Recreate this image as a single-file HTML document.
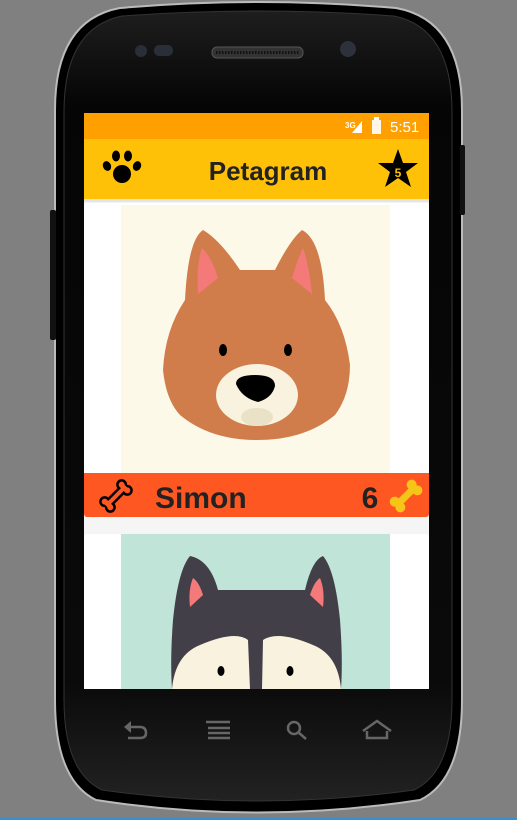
<!DOCTYPE html>
<html><head><meta charset="utf-8"><style>
html,body{margin:0;padding:0;width:517px;height:820px;overflow:hidden;background:#808080;font-family:"Liberation Sans",sans-serif}
</style></head><body>
<svg width="517" height="820" viewBox="0 0 517 820" style="position:absolute;left:0;top:0">
<defs>
<linearGradient id="bz" x1="0" y1="0" x2="0" y2="1"><stop offset="0" stop-color="#1e1e1e"/><stop offset="0.12" stop-color="#050505"/><stop offset="0.85" stop-color="#0a0a0a"/><stop offset="1" stop-color="#222"/></linearGradient>
</defs>
<path d="M120,8 Q258,-4 396,8 Q462,20 462,110 L462,700 Q462,780 420,800 Q258,825 96,800 Q55,780 55,700 L55,110 Q55,20 120,8Z" fill="#000" stroke="#bbb" stroke-width="2"/>
<path d="M122,16 Q258,6 394,16 Q452,28 452,112 L452,700 Q452,772 414,790 Q258,812 102,790 Q64,772 64,700 L64,112 Q64,28 122,16Z" fill="url(#bz)" stroke="#333" stroke-width="1"/>
<rect x="50" y="210" width="6" height="130" rx="2" fill="#111"/>
<rect x="460" y="145" width="5" height="70" rx="2" fill="#111"/>
<circle cx="141" cy="51" r="6" fill="#2a2e38"/>
<rect x="154" y="45" width="19" height="11" rx="5" fill="#2a2e38"/>
<circle cx="348" cy="49" r="8" fill="#2c313b"/>
<rect x="212" y="47" width="91" height="11" rx="5" fill="#333" stroke="#555"/>
<line x1="216" y1="52.5" x2="299" y2="52.5" stroke="#111" stroke-width="3" stroke-dasharray="1.5 1.5"/>
<g fill="none" stroke="#666" stroke-width="2.5">
<path d="M126,727 L140,727 Q146,727 146,733 Q146,738 140,738 L128,738"/>
<path d="M206,722 L230,722 M208,728 L230,728 M208,733 L230,733 M208,738 L230,738"/>
<circle cx="294" cy="728" r="6"/><path d="M298,732 L306,739"/>
<path d="M363,731 L377,721 L391,731 M367,731 L367,738 L387,738 L387,731"/>
</g>
<path d="M124,727 L131,721 L131,733Z" fill="#666"/>
<rect x="84" y="113" width="345" height="576" fill="#F5F5F5"/>
<rect x="84" y="113" width="345" height="26" fill="#FFA000"/>
<rect x="84" y="139" width="345" height="60" fill="#FFC107"/>
<rect x="84" y="199" width="345" height="3" fill="#e4e4e4"/>
<text x="345" y="128" font-size="8" font-weight="bold" fill="#fff">3G</text>
<path d="M352,133 L362,121 L362,133Z" fill="#fff"/>
<rect x="372" y="120" width="9" height="14" fill="#fff" opacity="0.9"/>
<rect x="374" y="117" width="5" height="3" fill="#fff"/>
<text x="390" y="132" font-size="15" fill="#fff">5:51</text>
<g fill="#000">
<ellipse cx="122" cy="174" rx="9" ry="9"/>
<ellipse cx="107" cy="166" rx="4" ry="5" transform="rotate(-25 107 166)"/>
<ellipse cx="116" cy="156" rx="4" ry="5.5"/>
<ellipse cx="128" cy="156" rx="4" ry="5.5"/>
<ellipse cx="137" cy="166" rx="4" ry="5" transform="rotate(25 137 166)"/>
</g>
<text x="268" y="180" font-size="26" font-weight="bold" fill="#222" text-anchor="middle">Petagram</text>
<path d="M398,149 L403,163 L418,163 L406,172 L411,187 L398,178 L385,187 L390,172 L378,163 L393,163Z" fill="#000"/>
<text x="398" y="177" font-size="12" font-weight="bold" fill="#FFC107" text-anchor="middle">5</text>
<rect x="84" y="203" width="345" height="314" rx="3" fill="#fff"/>
<rect x="121" y="205" width="269" height="268" fill="#FDF9E9"/>
<path d="M203,230 Q188,240 185,300 Q165,330 163,370 Q166,400 180,415 Q210,440 257,440 Q305,440 335,415 Q350,395 350,365 Q345,325 325,300 Q322,240 302,230 Q290,240 275,270 L240,270 Q220,240 203,230Z" fill="#D17C4B"/>
<path d="M202,248 Q196,265 198,294 L218,278 Q212,258 202,248Z" fill="#F47A7A"/>
<path d="M303,248 Q309,265 312,294 L292,278 Q298,258 303,248Z" fill="#F47A7A"/>
<ellipse cx="223" cy="350" rx="4" ry="6" fill="#000"/>
<ellipse cx="288" cy="350" rx="4" ry="6" fill="#000"/>
<ellipse cx="257" cy="395" rx="41" ry="31" fill="#F8F2DE"/>
<ellipse cx="257" cy="417" rx="16" ry="9" fill="#E9E2C6"/>
<path d="M236,384 Q236,375 255,375 Q275,375 275,386 Q272,398 258,402 Q242,398 236,384Z" fill="#000"/>
<rect x="84" y="473" width="345" height="44" rx="3" fill="#FF5722"/>
<rect x="84" y="473" width="345" height="6" fill="#FF5722"/>
<g transform="translate(116,496) rotate(-45)">
<g fill="#000">
<rect x="-11" y="-4.5" width="22" height="9"/>
<circle cx="-12" cy="-4" r="5.5"/><circle cx="-12" cy="4" r="5.5"/>
<circle cx="12" cy="-4" r="5.5"/><circle cx="12" cy="4" r="5.5"/>
</g>
<g fill="#FF5722">
<rect x="-11" y="-2" width="22" height="4"/>
<circle cx="-12" cy="-4" r="3"/><circle cx="-12" cy="4" r="3"/>
<circle cx="12" cy="-4" r="3"/><circle cx="12" cy="4" r="3"/>
<rect x="-14" y="-4" width="5" height="8"/><rect x="9" y="-4" width="5" height="8"/>
</g>
</g>
<text x="155" y="508" font-size="30" font-weight="bold" fill="#222">Simon</text>
<text x="370" y="508" font-size="30" font-weight="bold" fill="#222" text-anchor="middle">6</text>
<g transform="translate(406,496) rotate(-45)" fill="#F5C518">
<rect x="-11" y="-3.5" width="22" height="7"/>
<circle cx="-12" cy="-4" r="5"/><circle cx="-12" cy="4" r="5"/>
<circle cx="12" cy="-4" r="5"/><circle cx="12" cy="4" r="5"/>
</g>
<rect x="84" y="534" width="345" height="155" rx="3" fill="#fff"/>
<rect x="121" y="534" width="269" height="155" fill="#C0E4D7"/>
<path d="M190,556 Q178,570 173,620 Q170,660 172,689 L341,689 Q343,660 340,620 Q335,570 323,556 Q312,560 305,590 L218,590 Q210,560 190,556Z" fill="#433F48"/>
<path d="M193,578 Q188,590 190,607 L203,595 Q199,582 193,578Z" fill="#F47A7A"/>
<path d="M320,578 Q325,590 323,607 L310,595 Q314,582 320,578Z" fill="#F47A7A"/>
<path d="M172,689 Q175,655 200,645 Q235,630 248,640 L250,689Z" fill="#F8F2DE"/>
<path d="M341,689 Q338,655 313,645 Q278,630 263,640 L262,689Z" fill="#F8F2DE"/>
<ellipse cx="221" cy="671" rx="3.5" ry="5" fill="#000"/>
<ellipse cx="290" cy="671" rx="3.5" ry="5" fill="#000"/>
<rect x="0" y="818" width="517" height="2" fill="#3a8fd0"/>
</svg>
</body></html>
